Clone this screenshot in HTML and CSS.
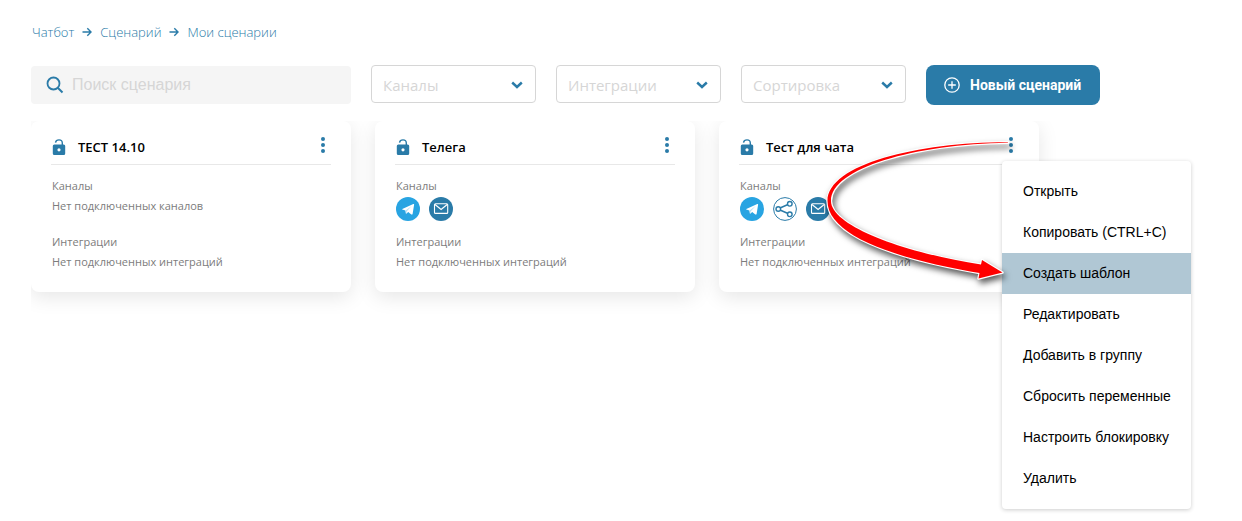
FILE: index.html
```html
<!DOCTYPE html>
<html lang="ru">
<head>
<meta charset="utf-8">
<meta name="viewport" content="width=device-width, initial-scale=1">
<title>Мои сценарии</title>
<link rel="stylesheet" href="styles.css">
</head>
<body>
<svg class="sprite" aria-hidden="true">
  <symbol id="arrow" viewBox="0 0 10 10"><path d="M0.5 5H9M5.3 1.3L9 5L5.3 8.7" fill="none" stroke="currentColor" stroke-width="1.4"/></symbol>
  <symbol id="chevron" viewBox="0 0 12 8"><path d="M1.2 1.5L6 6L10.800 1.5" fill="none" stroke="currentColor" stroke-width="2.4"/></symbol>
  <symbol id="lock" viewBox="0 0 14 18"><path d="M3.5 4.6C3.8 2.8 5.100 1.900 7 1.900C9.100 1.900 10.300 3.2 10.300 5V7" fill="none" stroke="currentColor" stroke-width="1.4"/><path fill="currentColor" fill-rule="evenodd" d="M2.3 6.5H11.7Q13.2 6.5 13.2 8V15.500Q13.2 17 11.7 17H2.3Q0.8 17 0.8 15.500V8Q0.8 6.5 2.3 6.5ZM7 10.2A1.6 1.6 0 1 0 7 13.400A1.6 1.6 0 1 0 7 10.2Z"/></symbol>
  <symbol id="dots" viewBox="0 0 4 16"><g fill="currentColor"><circle cx="2" cy="2" r="2"/><circle cx="2" cy="8" r="2"/><circle cx="2" cy="14" r="2"/></g></symbol>
  <symbol id="telegram" viewBox="0 0 24 24"><circle cx="12" cy="12" r="12" fill="#28a4e2"/><path fill="#fff" d="M6.3 12L17.3 7.1Q18.3 6.8 18.1 7.8L16.6 16.9Q16.3 18 15.3 17.4L12.2 15.1L10.5 16.6Q10 17 9.8 16.2L9.4 13.5L6.4 12.6Q5.6 12.3 6.3 12Z"/><path d="M9.6 13.4L15.7 9.1L10.8 14.2L10.3 16.5" fill="#b5dff5"/></symbol>
  <symbol id="mail" viewBox="0 0 24 24"><circle cx="12" cy="12" r="12" fill="#2a7ba8"/><rect x="5.5" y="6.8" width="13.2" height="9.6" rx="1" fill="none" stroke="#fff" stroke-width="1.1"/><path d="M6 7.5L12.1 12.5L18.2 7.5" fill="none" stroke="#fff" stroke-width="1.2"/></symbol>
  <symbol id="share" viewBox="0 0 24 24"><g fill="#fff" stroke="#2a7ba8" stroke-width="1.4"><circle cx="12" cy="12" r="11.4" stroke-width="1"/><path d="M7 11L15 7.500M7 13L15 16.500" fill="none"/><circle cx="5.3" cy="12" r="2.3"/><circle cx="16.8" cy="6.8" r="2.3"/><circle cx="16.8" cy="17.3" r="2.3"/></g></symbol>
</svg>

<main class="page">
  <nav class="crumbs" aria-label="Навигация">
    <a href="#">Чатбот</a>
    <svg><use href="#arrow"/></svg>
    <a href="#">Сценарий</a>
    <svg><use href="#arrow"/></svg>
    <a href="#">Мои сценарии</a>
  </nav>

  <div class="toolbar">
    <label class="search">
      <svg viewBox="0 0 18 18" aria-hidden="true"><circle cx="7.5" cy="7.5" r="6" fill="none" stroke="currentColor" stroke-width="1.8"/><path d="M12 12L16.5 16.5" stroke="currentColor" stroke-width="1.9"/></svg>
      <input type="search" placeholder="Поиск сценария" aria-label="Поиск сценария">
    </label>
    <div class="filter">
      <select aria-label="Каналы"><option>Каналы</option></select>
      <svg><use href="#chevron"/></svg>
    </div>
    <div class="filter">
      <select aria-label="Интеграции"><option>Интеграции</option></select>
      <svg><use href="#chevron"/></svg>
    </div>
    <div class="filter">
      <select aria-label="Сортировка"><option>Сортировка</option></select>
      <svg><use href="#chevron"/></svg>
    </div>
    <button class="create" type="button">
      <svg viewBox="0 0 16 16" aria-hidden="true"><g fill="none" stroke="currentColor" stroke-width="1.3"><circle cx="8" cy="8" r="7.2"/><path d="M8 4.2V11.8M4.2 8H11.8"/></g></svg>
      Новый сценарий
    </button>
  </div>

  <section class="cards">
    <article class="card">
      <header class="card-head">
        <svg class="lock"><use href="#lock"/></svg>
        <h2>ТЕСТ 14.10</h2>
        <button class="more" type="button" aria-label="Действия"><svg><use href="#dots"/></svg></button>
      </header>
      <div class="group">
        <p>Каналы</p>
        <p>Нет подключенных каналов</p>
      </div>
      <div class="group">
        <p>Интеграции</p>
        <p>Нет подключенных интеграций</p>
      </div>
    </article>

    <article class="card">
      <header class="card-head">
        <svg class="lock"><use href="#lock"/></svg>
        <h2>Телега</h2>
        <button class="more" type="button" aria-label="Действия"><svg><use href="#dots"/></svg></button>
      </header>
      <div class="group">
        <p>Каналы</p>
        <div class="channels">
          <svg><use href="#telegram"/></svg>
          <svg><use href="#mail"/></svg>
        </div>
      </div>
      <div class="group">
        <p>Интеграции</p>
        <p>Нет подключенных интеграций</p>
      </div>
    </article>

    <article class="card">
      <header class="card-head">
        <svg class="lock"><use href="#lock"/></svg>
        <h2>Тест для чата</h2>
        <button class="more" type="button" aria-label="Действия"><svg><use href="#dots"/></svg></button>
      </header>
      <div class="group">
        <p>Каналы</p>
        <div class="channels">
          <svg><use href="#telegram"/></svg>
          <svg><use href="#share"/></svg>
          <svg><use href="#mail"/></svg>
        </div>
      </div>
      <div class="group">
        <p>Интеграции</p>
        <p>Нет подключенных интеграций</p>
      </div>
      <div class="menu" role="menu">
        <button type="button" role="menuitem">Открыть</button>
        <button type="button" role="menuitem">Копировать (CTRL+C)</button>
        <button type="button" role="menuitem" class="active">Создать шаблон</button>
        <button type="button" role="menuitem">Редактировать</button>
        <button type="button" role="menuitem">Добавить в группу</button>
        <button type="button" role="menuitem">Сбросить переменные</button>
        <button type="button" role="menuitem">Настроить блокировку</button>
        <button type="button" role="menuitem">Удалить</button>
      </div>
      <svg class="pointer" viewBox="819 121 200 171" aria-hidden="true">
        <path d="M1008 142.300C920 142 827.500 164 827.500 201C827.500 234 890 258 979.500 273L978.500 278.500L1002.500 272.500L982 260L981 264.500C905 253 831 226 831 201C831 168 915 144 1008 142.700Z" fill="#f00" stroke="#fff" stroke-width="2.4" stroke-linejoin="round" paint-order="stroke"/>
      </svg>
    </article>
  </section>
</main>
</body>
</html>
```

FILE: styles.css
```css
* {
  box-sizing: border-box;
}

body {
  margin: 0;
  background: #fff;
  color: #000;
  font-family: "Open Sans", "Noto Sans", sans-serif;
}

.sprite {
  position: absolute;
  width: 0;
  height: 0;
}

.page {
  min-height: 100vh;
  padding: 22px 31px;
}

.crumbs {
  display: flex;
  align-items: center;
  gap: 8px;
  padding-left: 1px;
  color: #2a7ba8;
  font-size: 13px;
  font-weight: 300;
  line-height: 20px;
}

.crumbs a {
  color: inherit;
  text-decoration: none;
}

.crumbs svg {
  width: 10px;
  height: 10px;
}

.toolbar {
  display: flex;
  align-items: flex-start;
  flex-wrap: wrap;
  gap: 20px;
  margin-top: 23px;
}

.search {
  display: flex;
  align-items: center;
  align-self: center;
  gap: 8px;
  width: 320px;
  height: 38px;
  padding: 0 15px;
  border-radius: 4px;
  background: #f5f5f5;
  color: #2a7ba8;
}

.search svg {
  flex: none;
  width: 18px;
  height: 18px;
}

.search input {
  flex: 1;
  min-width: 0;
  padding: 0;
  border: 0;
  outline: 0;
  background: none;
  font: 16px "Liberation Sans", Arial, sans-serif;
}

.search input::placeholder {
  color: #d6d6d6;
}

.filter {
  position: relative;
  width: 165px;
}

.filter select {
  width: 100%;
  height: 38px;
  padding: 2px 36px 0 11px;
  border: 1px solid #d6d6d6;
  border-radius: 4px;
  background: #fff;
  color: #d6d6d6;
  font-family: inherit;
  font-size: 15px;
  appearance: none;
}

.filter svg {
  position: absolute;
  top: 16px;
  right: 13px;
  width: 12px;
  height: 8px;
  color: #2a7ba8;
  pointer-events: none;
}

.create {
  display: flex;
  align-items: center;
  gap: 10px;
  height: 40px;
  padding: 0 19px 0 18px;
  border: 0;
  border-radius: 8px;
  background: #2a7ba8;
  color: #fff;
  font: 700 14px Roboto, sans-serif;
}

.create svg {
  width: 16px;
  height: 16px;
}

.cards {
  display: grid;
  grid-template-columns: repeat(auto-fill, 320px);
  gap: 24px;
  margin-top: 16px;
  clip-path: inset(0 -200px -250px 0);
}

.card {
  position: relative;
  padding: 8px 20px 20px;
  border-radius: 8px;
  background: #fff;
  box-shadow: 0 5px 20px rgba(0, 0, 0, 0.1);
}

.card-head {
  display: flex;
  align-items: center;
  height: 36px;
  border-bottom: 1px solid #e8e8e8;
}

.lock {
  width: 14px;
  height: 18px;
  margin-left: 1px;
  color: #2a7ba8;
}

.card h2 {
  flex: 1;
  margin: 0 0 0 12px;
  font-size: 13px;
  font-weight: 600;
  line-height: 20px;
}

.more {
  display: grid;
  place-items: center;
  width: 16px;
  height: 24px;
  margin-bottom: 4px;
  padding: 0;
  border: 0;
  background: none;
  color: #2a7ba8;
}

.more svg {
  width: 4px;
  height: 16px;
}

.group {
  height: 40px;
  margin-top: 16px;
  padding-left: 1px;
  color: #7c7c7c;
  font-size: 11px;
  line-height: 20px;
}

.card-head + .group {
  margin-top: 11px;
}

.group p {
  margin: 0;
  white-space: nowrap;
}

.channels {
  display: flex;
  gap: 9px;
  padding-top: 1px;
}

.channels svg {
  width: 24px;
  height: 24px;
}

.menu {
  position: absolute;
  top: 40px;
  left: 283px;
  z-index: 1;
  display: flex;
  flex-direction: column;
  min-width: 189px;
  padding: 10px 0;
  border-radius: 4px;
  background: #fff;
  box-shadow: 0 1px 4px rgba(0, 0, 0, 0.2);
}

.menu button {
  height: 41px;
  padding: 0 20px 2px 21px;
  border: 0;
  background: none;
  color: #000;
  font: 14px "Liberation Sans", Arial, sans-serif;
  text-align: left;
  white-space: nowrap;
}

.menu .active {
  background: #b0c7d4;
}

.pointer {
  position: absolute;
  top: 0;
  left: 100px;
  z-index: 2;
  width: 200px;
  height: 171px;
  filter: drop-shadow(2px 4px 3px rgba(0, 0, 0, 0.65));
  pointer-events: none;
}
```
